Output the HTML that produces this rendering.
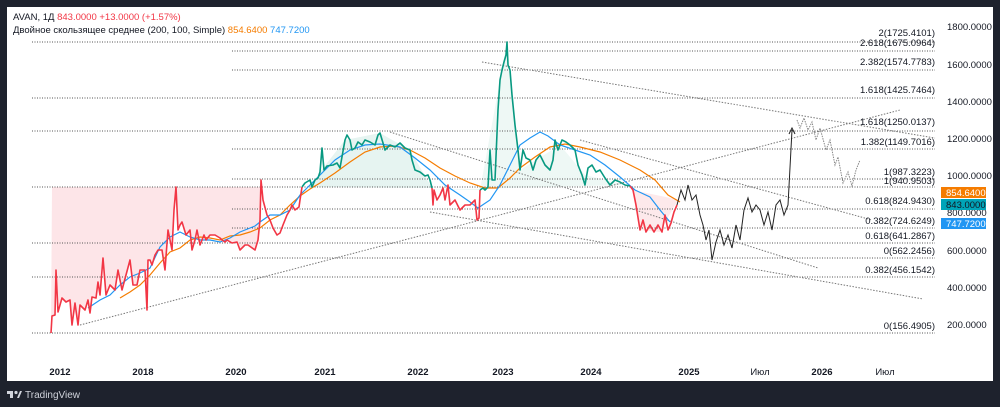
<!DOCTYPE html>
<html><head><meta charset="utf-8"><style>
html,body{margin:0;padding:0;background:#1e222d;width:1000px;height:407px;overflow:hidden;font-family:"Liberation Sans","DejaVu Sans",sans-serif}
</style></head><body>
<svg width="1000" height="407" viewBox="0 0 1000 407" xmlns="http://www.w3.org/2000/svg" style="position:absolute;left:0;top:0;font-family:'Liberation Sans','DejaVu Sans',sans-serif">
<rect x="0" y="0" width="1000" height="407" fill="#1e222d"/>
<rect x="7" y="7" width="986" height="374" fill="#ffffff"/>
<!-- pink fill region -->
<polygon fill="#fde5e8" points="52,187 51,333 52,316 55,315 56,270 58,312 62,298 66,302 70,300 72,325 75,303 78,325 80,305 85,310 88,300 90,313 92,297 96,298 98,282 100,295 103,258 106,295 110,285 115,290 118,270 122,290 126,275 130,260 133,285 137,285 140,270 145,270 147,310 148,260 150,260 152,265 155,255 158,250 162,250 165,270 168,230 172,250 174,210 176,187 178,230 180,225 182,222 186,235 190,230 192,250 195,240 197,230 200,245 204,235 206,240 210,235 215,235 220,238 222,240 225,242 227,240 232,243 237,242 240,250 245,245 248,245 255,250 258,240 260,220 261,187"/>
<polygon points="312,187 320,172 345,140 380,133 410,150 432,188" fill="#e6f4f1"/>
<polygon points="480,190 500,80 507,42 515,120 520,170 560,145 585,175 625,185 432,190" fill="#eef8f5"/>
<polygon points="632,190 640,230 660,232 675,205 680,200" fill="#fde9eb"/>
<!-- fib horizontal dotted lines -->
<g stroke="#555" stroke-width="1" stroke-dasharray="1,1.5" fill="none">
<line x1="32" y1="42" x2="935" y2="42"/>
<line x1="232" y1="51" x2="935" y2="51"/>
<line x1="232" y1="70" x2="935" y2="70"/>
<line x1="32" y1="98" x2="935" y2="98"/>
<line x1="32" y1="131" x2="935" y2="131"/>
<line x1="232" y1="149" x2="935" y2="149"/>
<line x1="232" y1="179" x2="935" y2="179"/>
<line x1="32" y1="187" x2="935" y2="187"/>
<line x1="232" y1="209" x2="935" y2="209"/>
<line x1="232" y1="228" x2="935" y2="228"/>
<line x1="32" y1="243" x2="935" y2="243"/>
<line x1="232" y1="258" x2="935" y2="258"/>
<line x1="32" y1="277" x2="935" y2="277"/>
<line x1="32" y1="333" x2="935" y2="333"/>
</g>
<!-- trend lines -->
<g stroke="#777" stroke-width="1" stroke-dasharray="1.5,1.5" fill="none">
<line x1="80" y1="325" x2="900" y2="110"/>
<line x1="482" y1="62" x2="935" y2="138"/>
<line x1="390" y1="132" x2="818" y2="268"/>
<line x1="430" y1="212" x2="923" y2="299"/>
<line x1="580" y1="140" x2="872" y2="220"/>
</g>
<!-- MAs -->
<polyline fill="none" stroke="#f57c00" stroke-width="1.2" points="120,298 130,292 140,285 150,275 160,263 170,252 180,248 190,240 200,237 210,238 220,240 230,236 240,235 250,232 260,228 270,220 280,215 290,205 300,196 310,189 320,183 335,173 350,162 365,152 380,147 395,146 410,150 425,158 440,168 455,176 470,183 485,188 498,188 510,178 520,168 535,157 550,147 565,144 580,147 600,152 620,160 640,170 655,180 668,195 680,202"/>
<polyline fill="none" stroke="#2196f3" stroke-width="1.2" points="88,308 100,300 110,295 120,285 130,277 140,273 150,268 160,247 170,237 180,232 190,237 200,240 210,240 220,242 230,238 240,232 255,226 260,222 270,215 280,215 290,210 300,195 310,185 320,175 335,160 350,150 365,145 380,144 400,147 415,158 430,170 445,185 460,195 470,202 478,208 490,200 500,185 510,165 520,145 530,138 540,132 548,136 560,145 575,150 590,155 605,165 620,177 635,190 650,197 660,210 670,222"/>
<!-- price red early -->
<polyline fill="none" stroke="#f23645" stroke-width="1.6" stroke-linejoin="round" points="51,333 52,316 55,315 56,270 58,312 62,298 66,302 70,300 72,325 75,303 78,325 80,305 85,310 88,300 90,313 92,297 96,298 98,282 100,295 103,258 106,295 110,285 115,290 118,270 122,290 126,275 130,260 133,285 137,285 140,270 145,270 147,310 148,260 150,260 152,265 155,255 158,250 162,250 165,270 168,230 172,250 174,210 176,187 178,230 180,225 182,222 186,235 190,230 192,250 195,240 197,230 200,245 204,235 206,240 210,235 215,235 220,238 222,240 225,242 227,240 232,243 237,242 240,250 245,245 248,245 255,250 258,240 260,220 261,180 263,200 267,215 270,220 273,228 277,235 280,233 283,225 287,215 290,210 292,205 295,210 299,207 300,200 302,187"/>
<polyline fill="none" stroke="#089981" stroke-width="1.6" stroke-linejoin="round" points="302,187 305,183 310,180 312,187 315,180 318,178 320,172 322,148 324,170 327,166 333,165 337,163 340,168 345,140 347,135 350,140 352,150 355,148 358,142 362,145 365,140 370,142 375,145 378,135 380,133 383,143 385,150 390,145 395,147 400,143 405,148 410,150 412,160 415,170 420,172 425,176 428,175 430,180 432,188"/>
<polyline fill="none" stroke="#f23645" stroke-width="1.6" stroke-linejoin="round" points="432,188 433,205 434,190 437,200 440,195 443,188 445,200 448,185 450,205 455,200 460,210 465,205 470,205 475,200 477,220 479,218 480,190"/>
<polyline fill="none" stroke="#089981" stroke-width="1.6" stroke-linejoin="round" points="480,190 483,188 485,190 488,187 490,150 492,180 495,180 498,110 500,80 502,70 504,62 506,55 507,42 508,65 510,70 512,95 515,125 518,150 520,170 523,150 526,158 530,160 533,170 536,160 540,155 545,165 550,170 553,160 555,140 558,150 562,140 566,142 570,145 575,150 578,165 582,175 585,185 588,168 592,165 596,172 600,170 605,178 610,185 615,180 620,182 625,185 630,186"/>
<polyline fill="none" stroke="#f23645" stroke-width="1.6" stroke-linejoin="round" points="630,186 633,190 636,205 640,230 643,220 646,232 650,225 654,232 658,225 662,232 665,215 668,230 671,223 674,212 677,205"/>
<!-- projection black -->
<polyline fill="none" stroke="#222" stroke-width="1" points="677,205 681,190 685,200 688,185 692,200 696,195 700,215 703,225 706,240 709,230 712,260 716,242 720,230 724,245 728,235 732,248 736,225 740,240 744,210 748,198 752,212 756,205 760,210 764,225 768,212 772,230 776,205 780,200 784,215 788,205 792,130"/>
<polyline fill="none" stroke="#222" stroke-width="1" points="789,134 792,128 795,134"/>
<polyline fill="none" stroke="#888" stroke-width="1" stroke-dasharray="1.5,1" points="797,120 800,128 804,118 808,130 812,122 816,140 820,128 826,150 830,140 835,165 838,157 843,183 848,172 852,186 856,170 860,160"/>
<!-- fib labels -->
<g font-size="9.5" fill="#131722" text-anchor="end">
<text x="935" y="36">2(1725.4101)</text>
<text x="935" y="46">2.618(1675.0964)</text>
<text x="935" y="65">2.382(1574.7783)</text>
<text x="935" y="93">1.618(1425.7464)</text>
<text x="935" y="125">1.618(1250.0137)</text>
<text x="935" y="145">1.382(1149.7016)</text>
<text x="935" y="175">1(987.3223)</text>
<text x="935" y="184">1(940.9503)</text>
<text x="935" y="204">0.618(824.9430)</text>
<text x="935" y="224">0.382(724.6249)</text>
<text x="935" y="239">0.618(641.2867)</text>
<text x="935" y="254">0(562.2456)</text>
<text x="935" y="273">0.382(456.1542)</text>
<text x="935" y="329">0(156.4905)</text>
</g>
<!-- price axis -->
<g font-size="9.5" fill="#131722">
<text x="947" y="30">1800.0000</text>
<text x="947" y="68">1600.0000</text>
<text x="947" y="105">1400.0000</text>
<text x="947" y="142">1200.0000</text>
<text x="947" y="179">1000.0000</text>
<text x="947" y="216">800.0000</text>
<text x="947" y="254">600.0000</text>
<text x="947" y="291">400.0000</text>
<text x="947" y="328">200.0000</text>
</g>
<rect x="941" y="187" width="45" height="11" fill="#f57c00"/>
<text x="946" y="196" font-size="9.5" fill="#fff">854.6400</text>
<rect x="941" y="199" width="45" height="11" fill="#00a4b8"/>
<text x="946" y="208" font-size="9.5" fill="#131722">843.0000</text>
<rect x="941" y="218" width="45" height="11" fill="#2196f3"/>
<text x="946" y="227" font-size="9.5" fill="#fff">747.7200</text>
<!-- time axis -->
<g font-size="9.5" fill="#131722" font-weight="bold" text-anchor="middle">
<text x="60" y="375">2012</text>
<text x="143" y="375">2018</text>
<text x="236" y="375">2020</text>
<text x="325" y="375">2021</text>
<text x="418" y="375">2022</text>
<text x="503" y="375">2023</text>
<text x="591" y="375">2024</text>
<text x="689" y="375">2025</text>
<text x="760" y="375" font-weight="normal">Июл</text>
<text x="822" y="375">2026</text>
<text x="885" y="375" font-weight="normal">Июл</text>
</g>
<!-- header -->
<text x="13" y="20" font-size="9.5" fill="#131722">AVAN, 1Д <tspan fill="#f23645">843.0000  +13.0000 (+1.57%)</tspan></text>
<text x="13" y="33" font-size="9.5" fill="#131722">Двойное скользящее среднее (200, 100, Simple) <tspan fill="#f57c00">854.6400</tspan> <tspan fill="#2196f3">747.7200</tspan></text>
<!-- logo -->
<g fill="#d1d4dc">
<rect x="7" y="391" width="6" height="3"/><rect x="10" y="391" width="3" height="7"/>
<circle cx="16" cy="392.5" r="1.6"/>
<polygon points="17,398 20,391 22,391 19,398"/>
</g>
<text x="25" y="398" font-size="10" fill="#d1d4dc">TradingView</text>
</svg>
</body></html>
